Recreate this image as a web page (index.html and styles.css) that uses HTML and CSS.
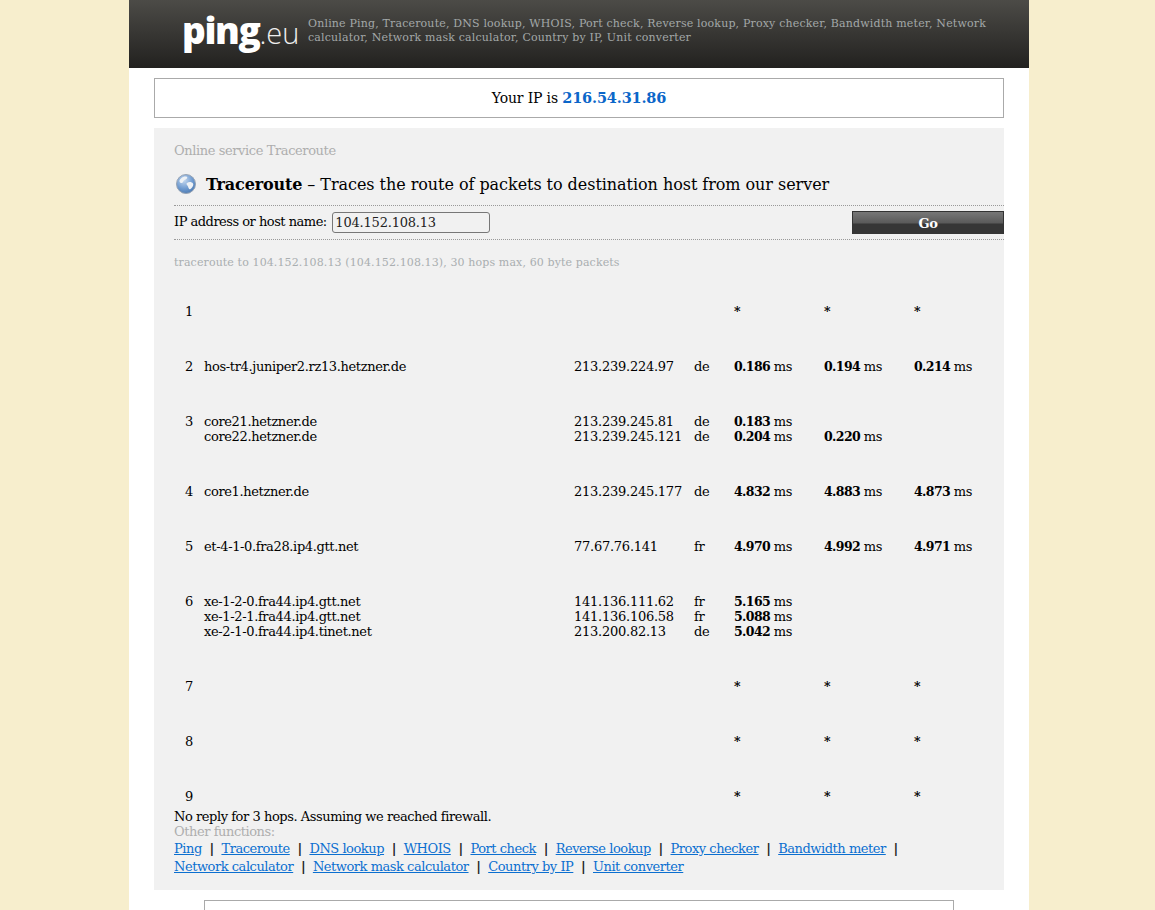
FILE: index.html
```html
<!DOCTYPE html>
<html lang="en">
<head>
<meta charset="utf-8">
<title>Traceroute - ping.eu</title>
<link rel="stylesheet" href="styles.css">
</head>
<body>
<div class="page">
  <header class="top">
    <div class="logo"><span class="logo-ping">ping</span><span class="logo-eu">.eu</span></div>
    <p class="tagline">Online Ping, Traceroute, DNS lookup, WHOIS, Port check, Reverse lookup, Proxy checker, Bandwidth meter, Network calculator, Network mask calculator, Country by IP, Unit converter</p>
  </header>
  <div class="ipbox">Your IP is <b class="ip">216.54.31.86</b></div>
  <main class="panel">
    <div class="crumb">Online service Traceroute</div>
    <h1 class="title">
      <svg class="globe" width="22" height="22" viewBox="0 0 22 22" aria-hidden="true">
        <defs>
          <radialGradient id="g" cx="40%" cy="30%" r="75%">
            <stop offset="0" stop-color="#c6d9ef"/><stop offset="0.6" stop-color="#6f9bd0"/><stop offset="1" stop-color="#4a78b0"/>
          </radialGradient>
        </defs>
        <circle cx="11" cy="11" r="9.5" fill="url(#g)" stroke="#98a4b4"/>
        <path d="M6 5.500c2-2 5-2.500 6-1.500s-1 2.500-2.500 3-1 3-3 3-3-2.500-.5-4.500zM12 10c2-1.500 5-1 6 .5s-1 4.500-2.500 5.500-2-1-2.500-2.500-2.500-2.500-1-3.500z" fill="#eef2f6"/>
      </svg>
      <span><b>Traceroute</b> – Traces the route of packets to destination host from our server</span>
    </h1>
    <form class="query">
      <label class="query-label">IP address or host name: <input class="query-input" type="text" value="104.152.108.13"></label>
      <button class="go" type="button">Go</button>
    </form>
    <div class="cmd">traceroute to 104.152.108.13 (104.152.108.13), 30 hops max, 60 byte packets</div>
    <table class="hops">
      <colgroup>
        <col class="c-n"><col class="c-host"><col class="c-ip"><col class="c-cc"><col class="c-t"><col class="c-t"><col class="c-t">
      </colgroup>
      <tr><td class="n">1</td><td></td><td></td><td></td><td><b>*</b></td><td><b>*</b></td><td><b>*</b></td></tr>
      <tr><td class="n">2</td><td>hos-tr4.juniper2.rz13.hetzner.de</td><td>213.239.224.97</td><td>de</td><td><b>0.186</b> ms</td><td><b>0.194</b> ms</td><td><b>0.214</b> ms</td></tr>
      <tr><td class="n">3</td><td>core21.hetzner.de<br>core22.hetzner.de</td><td>213.239.245.81<br>213.239.245.121</td><td>de<br>de</td><td><b>0.183</b> ms<br><b>0.204</b> ms</td><td><br><b>0.220</b> ms</td><td></td></tr>
      <tr><td class="n">4</td><td>core1.hetzner.de</td><td>213.239.245.177</td><td>de</td><td><b>4.832</b> ms</td><td><b>4.883</b> ms</td><td><b>4.873</b> ms</td></tr>
      <tr><td class="n">5</td><td>et-4-1-0.fra28.ip4.gtt.net</td><td>77.67.76.141</td><td>fr</td><td><b>4.970</b> ms</td><td><b>4.992</b> ms</td><td><b>4.971</b> ms</td></tr>
      <tr><td class="n">6</td><td>xe-1-2-0.fra44.ip4.gtt.net<br>xe-1-2-1.fra44.ip4.gtt.net<br>xe-2-1-0.fra44.ip4.tinet.net</td><td>141.136.111.62<br>141.136.106.58<br>213.200.82.13</td><td>fr<br>fr<br>de</td><td><b>5.165</b> ms<br><b>5.088</b> ms<br><b>5.042</b> ms</td><td></td><td></td></tr>
      <tr><td class="n">7</td><td></td><td></td><td></td><td><b>*</b></td><td><b>*</b></td><td><b>*</b></td></tr>
      <tr><td class="n">8</td><td></td><td></td><td></td><td><b>*</b></td><td><b>*</b></td><td><b>*</b></td></tr>
      <tr class="last"><td class="n">9</td><td></td><td></td><td></td><td><b>*</b></td><td><b>*</b></td><td><b>*</b></td></tr>
    </table>
    <div class="note">No reply for 3 hops. Assuming we reached firewall.</div>
    <div class="other">Other functions:</div>
    <nav class="links">
      <a href="#">Ping</a> <i>|</i> <a href="#">Traceroute</a> <i>|</i> <a href="#">DNS lookup</a> <i>|</i> <a href="#">WHOIS</a> <i>|</i> <a href="#">Port check</a> <i>|</i> <a href="#">Reverse lookup</a> <i>|</i> <a href="#">Proxy checker</a> <i>|</i> <a href="#">Bandwidth meter</a> <i>|</i> <a href="#">Network calculator</a> <i>|</i> <a href="#">Network mask calculator</a> <i>|</i> <a href="#">Country by IP</a> <i>|</i> <a href="#">Unit converter</a>
    </nav>
  </main>
  <div class="bottombox"></div>
</div>
</body>
</html>
```
FILE: styles.css
```css
html, body { margin: 0; padding: 0; height: 100%; overflow: hidden; }
body { background: #f7eecd; font-family: "DejaVu Serif", serif; font-size: 13px; color: #000; }
.page { width: 900px; height: 910px; margin-left: 129px; background: #fff; overflow: hidden; }
.top { height: 68px; background: linear-gradient(#4c4b47, #22211f); display: flex; align-items: flex-start; padding-left: 53px; box-sizing: border-box; }
.logo { width: 126px; height: 68px; flex: none; color: #fff; line-height: 60px; white-space: nowrap; }
.logo-ping { font-family: "Open Sans", sans-serif; font-weight: 800; font-size: 37px; letter-spacing: -1.4px; }
.logo-eu { font-family: "Open Sans", sans-serif; font-weight: 300; font-size: 29px; color: #eee; }
.tagline { margin: 17px 40px 0 0; font-size: 11px; line-height: 14px; color: #a3a8a8; letter-spacing: 0.17px; }
.ipbox { margin: 10px 25px 0; height: 38px; border: 1px solid #aaa; text-align: center; font-size: 14px; line-height: 38px; letter-spacing: -0.15px; }
.ip { color: #0b66c9; font-size: 14.500px; letter-spacing: -0.17px; }
.panel { margin: 10px 25px 0; height: 762px; background: #f1f1f1; padding: 15px 0 0 20px; box-sizing: border-box; }
.crumb { color: #aeaeae; line-height: 16px; letter-spacing: -0.4px; }
.title { margin: 12px 0 0 1px; font-size: 16px; font-weight: normal; display: flex; align-items: center; gap: 9px; height: 26px; letter-spacing: -0.05px; }
.globe { flex: none; }
.title b { letter-spacing: -0.15px; }
.query { display: flex; justify-content: space-between; align-items: center; border-top: 1px dotted #999; border-bottom: 1px dotted #999; height: 35px; margin-top: 8px; box-sizing: border-box; }
.query-label { letter-spacing: -0.5px; }
.query-input { width: 158px; height: 21px; box-sizing: border-box; border: 1px solid #777; border-radius: 3px; background: #f1f1f1; font: 13px "DejaVu Serif", serif; letter-spacing: -0.2px; color: #222; padding: 0 2px; margin-left: 2px; vertical-align: middle; }
.go { width: 152px; height: 23px; border: 1px solid #333; border-bottom: 0; padding: 0; background: linear-gradient(#777 0, #5a5a5a 11px, #363636 12px, #363636 100%); color: #fff; font: bold 13px "DejaVu Serif", serif; letter-spacing: -0.4px; }
.cmd { margin-top: 16px; font-size: 11px; line-height: 14px; color: #a9aeb0; letter-spacing: 0.12px; }
.hops { border-collapse: collapse; table-layout: fixed; width: 810px; margin-top: 14px; line-height: 15px; letter-spacing: -0.3px; }
.hops td { padding: 20px 0; vertical-align: top; white-space: nowrap; }
.hops td:nth-child(2) { letter-spacing: -0.36px; }
.hops td:nth-child(3) { letter-spacing: -0.25px; }
.hops td:nth-child(n+5) { letter-spacing: -0.45px; }
.hops .last td { padding-bottom: 5px; }
.c-n { width: 30px; }
.c-host { width: 370px; }
.c-ip { width: 120px; }
.c-cc { width: 40px; }
.c-t { width: 90px; }
.n { padding-left: 11px !important; }
.hops b { font-size: 12.500px; letter-spacing: -0.6px; }
.note { line-height: 15px; letter-spacing: -0.44px; }
.other { color: #aeaeae; line-height: 15px; letter-spacing: -0.44px; }
.links { line-height: 18px; margin-top: 1px; letter-spacing: -0.46px; }
.links a { color: #0b6fd0; white-space: nowrap; }
.links i { font-style: normal; font-weight: bold; color: #222; margin: 0 4px; }
.bottombox { margin: 10px 0 0 75px; width: 750px; height: 40px; box-sizing: border-box; border: 1px solid #aaa; }
```
